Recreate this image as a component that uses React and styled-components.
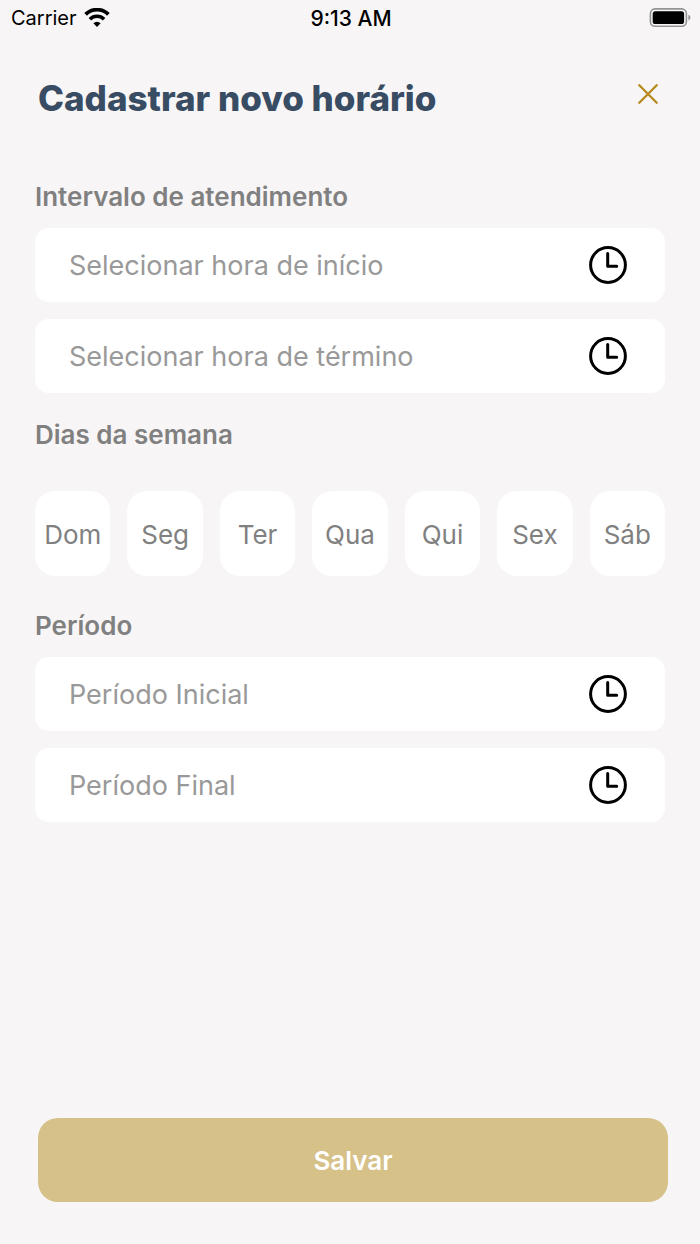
import React, { useState } from 'react';
import styled, { createGlobalStyle } from 'styled-components';

const GlobalStyle = createGlobalStyle`
  * {
    box-sizing: border-box;
  }

  body {
    margin: 0;
    background-color: #f7f5f6;
    font-family: Inter, sans-serif;
  }

  button, input {
    font-family: inherit;
  }
`;

const Screen = styled.div`
  display: flex;
  flex-direction: column;
  min-height: 100vh;
`;

const StatusBar = styled.div`
  display: grid;
  grid-template-columns: 1fr auto 1fr;
  align-items: center;
  height: 36px;
  padding: 0 9px 0 11px;
  font-size: 20px;
  color: #000000;
`;

const Carrier = styled.div`
  display: flex;
  align-items: center;
  gap: 7px;
`;

const Time = styled.div`
  font-size: 21px;
  font-weight: 500;
`;

const Battery = styled.svg`
  justify-self: end;
`;

const Header = styled.header`
  display: flex;
  justify-content: space-between;
  align-items: flex-start;
  padding: 42px 36px 0 38px;
`;

const Title = styled.h1`
  margin: 0;
  font-size: 35px;
  line-height: 40px;
  font-weight: 800;
  color: #384c64;
`;

const CloseButton = styled.button`
  display: flex;
  align-items: center;
  justify-content: center;
  width: 32px;
  height: 32px;
  padding: 0;
  border: none;
  background: none;
  cursor: pointer;
`;

const Form = styled.form`
  display: flex;
  flex-direction: column;
  flex: 1;
  padding: 61px 35px 42px;
`;

const Section = styled.section`
  margin-bottom: ${(props) => props.$space || 0}px;
`;

const SectionTitle = styled.h2`
  margin: 0 0 ${(props) => props.$space || 13}px;
  font-size: 26px;
  line-height: 36px;
  font-weight: 600;
  color: #808080;
`;

const Fields = styled.div`
  display: flex;
  flex-direction: column;
  gap: 17px;
`;

const Field = styled.label`
  display: flex;
  align-items: center;
  height: 74px;
  padding: 0 38px 0 34px;
  border-radius: 14px;
  background-color: #ffffff;
`;

const Input = styled.input`
  flex: 1;
  min-width: 0;
  padding: 0;
  border: none;
  outline: none;
  background: none;
  font-size: 27px;
  color: #384c64;

  &::placeholder {
    color: #999999;
    opacity: 1;
  }
`;

const Days = styled.div`
  display: grid;
  grid-template-columns: repeat(7, 1fr);
  gap: 17px;
`;

const DayButton = styled.button`
  height: 85px;
  padding: 2px 0 0;
  border: none;
  border-radius: 20px;
  background-color: ${(props) => (props.$active ? '#d6c188' : '#ffffff')};
  font-size: 26px;
  color: ${(props) => (props.$active ? '#ffffff' : '#808080')};
  cursor: pointer;
`;

const SaveButton = styled.button`
  height: 84px;
  margin: auto -3px 0 3px;
  border: none;
  border-radius: 20px;
  background-color: #d6c188;
  font-size: 26px;
  font-weight: 600;
  color: #ffffff;
  cursor: pointer;
`;

const days = ['Dom', 'Seg', 'Ter', 'Qua', 'Qui', 'Sex', 'Sáb'];

const WifiIcon = () => (
  <svg width="26" height="20" viewBox="0 0 26 20" fill="none" stroke="#000000" aria-hidden="true">
    <path d="M1.6 6.4a16.2 16.2 0 0 1 22.8 0" strokeWidth="3.8" />
    <path d="M5.9 11.2a10.1 10.1 0 0 1 14.2 0" strokeWidth="3.6" />
    <path d="M13 19l-3.600-3.700a5 5 0 0 1 7.200 0z" fill="#000000" stroke="none" />
  </svg>
);

const BatteryIcon = () => (
  <Battery width="42" height="20" viewBox="0 0 42 20" fill="none" aria-hidden="true">
    <rect x="1.4" y="0.9" width="36" height="17.4" rx="4.6" stroke="#959494" strokeWidth="1.6" />
    <rect x="3.7" y="3.2" width="31.4" height="12.800" rx="2.6" fill="#000000" />
    <path d="M39.4 6.700c1.300.4 2 1.500 2 2.900s-.7 2.500-2 2.900z" fill="#959494" />
  </Battery>
);

const CloseIcon = () => (
  <svg width="20" height="20" viewBox="0 0 20 20" fill="none" aria-hidden="true">
    <path d="M1.300 1.300l17.400 17.400M18.700 1.300l-17.400 17.400" stroke="#b5891b" strokeWidth="2.300" strokeLinecap="round" />
  </svg>
);

const ClockIcon = () => (
  <svg width="38" height="38" viewBox="0 0 38 38" fill="none" stroke="#000000" strokeWidth="3" aria-hidden="true">
    <circle cx="19" cy="19" r="17.4" />
    <path d="M18.7 7.600v12.600h9" strokeLinecap="round" strokeLinejoin="round" />
  </svg>
);

const TimeField = ({ name, placeholder }) => (
  <Field>
    <Input type="text" name={name} placeholder={placeholder} aria-label={placeholder} />
    <ClockIcon />
  </Field>
);

const App = () => {
  const [selected, setSelected] = useState([]);

  const toggleDay = (day) => {
    setSelected(selected.includes(day) ? selected.filter((d) => d !== day) : [...selected, day]);
  };

  return (
    <Screen>
      <GlobalStyle />
      <StatusBar>
        <Carrier>
          Carrier
          <WifiIcon />
        </Carrier>
        <Time>9:13 AM</Time>
        <BatteryIcon />
      </StatusBar>

      <Header>
        <Title>Cadastrar novo horário</Title>
        <CloseButton type="button" aria-label="Fechar">
          <CloseIcon />
        </CloseButton>
      </Header>

      <Form onSubmit={(e) => e.preventDefault()}>
        <Section $space={24}>
          <SectionTitle>Intervalo de atendimento</SectionTitle>
          <Fields>
            <TimeField name="horaInicio" placeholder="Selecionar hora de início" />
            <TimeField name="horaTermino" placeholder="Selecionar hora de término" />
          </Fields>
        </Section>

        <Section $space={32}>
          <SectionTitle $space={38}>Dias da semana</SectionTitle>
          <Days>
            {days.map((day) => (
              <DayButton
                key={day}
                type="button"
                $active={selected.includes(day)}
                aria-pressed={selected.includes(day)}
                onClick={() => toggleDay(day)}
              >
                {day}
              </DayButton>
            ))}
          </Days>
        </Section>

        <Section>
          <SectionTitle>Período</SectionTitle>
          <Fields>
            <TimeField name="periodoInicial" placeholder="Período Inicial" />
            <TimeField name="periodoFinal" placeholder="Período Final" />
          </Fields>
        </Section>

        <SaveButton type="submit">Salvar</SaveButton>
      </Form>
    </Screen>
  );
};

export default App;
